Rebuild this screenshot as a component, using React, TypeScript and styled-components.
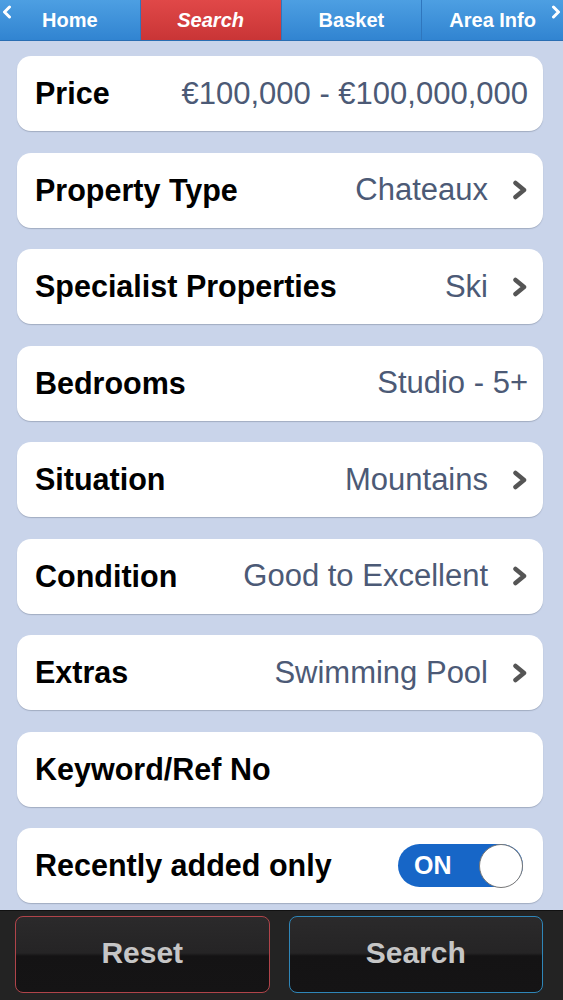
import styled, { createGlobalStyle } from 'styled-components';

const GlobalStyle = createGlobalStyle`
  html, body {
    margin: 0;
    padding: 0;
    background: #c9d4ea;
  }
  * {
    box-sizing: border-box;
  }
`;

type Row = {
  label: string;
  value?: string;
  arrow?: boolean;
  toggle?: boolean;
};

const rows: Row[] = [
  { label: 'Price', value: '€100,000 - €100,000,000' },
  { label: 'Property Type', value: 'Chateaux', arrow: true },
  { label: 'Specialist Properties', value: 'Ski', arrow: true },
  { label: 'Bedrooms', value: 'Studio - 5+' },
  { label: 'Situation', value: 'Mountains', arrow: true },
  { label: 'Condition', value: 'Good to Excellent', arrow: true },
  { label: 'Extras', value: 'Swimming Pool', arrow: true },
  { label: 'Keyword/Ref No' },
  { label: 'Recently added only', toggle: true },
];

const tabs = ['Home', 'Search', 'Basket', 'Area Info'];

const App = () => (
  <Page>
    <GlobalStyle />
    <TabBar>
      <EdgeArrow $side="left" viewBox="0 0 10 14">
        <path d="M7.5 2 L2.5 7 L7.5 12" fill="none" stroke="#fff" strokeWidth="3" strokeLinecap="round" strokeLinejoin="round" />
      </EdgeArrow>
      {tabs.map(t => (
        <Tab key={t} $active={t === 'Search'}>
          {t}
        </Tab>
      ))}
      <EdgeArrow $side="right" viewBox="0 0 10 14">
        <path d="M2.5 2 L7.5 7 L2.5 12" fill="none" stroke="#fff" strokeWidth="3" strokeLinecap="round" strokeLinejoin="round" />
      </EdgeArrow>
    </TabBar>
    <List>
      {rows.map(r => (
        <Card key={r.label}>
          <Label>{r.label}</Label>
          {r.value && <Value>{r.value}</Value>}
          {r.arrow && (
            <Chevron viewBox="0 0 16 20">
              <path d="M3.5 3 L12 10 L3.5 17" fill="none" stroke="#555" strokeWidth="4.5" strokeLinecap="round" strokeLinejoin="round" />
            </Chevron>
          )}
          {r.toggle && (
            <Toggle>
              <ToggleText>ON</ToggleText>
              <Knob />
            </Toggle>
          )}
        </Card>
      ))}
    </List>
    <BottomBar>
      <ActionButton $accent="#b0444a">Reset</ActionButton>
      <ActionButton $accent="#2f86b8">Search</ActionButton>
    </BottomBar>
  </Page>
);

const Page = styled.div`
  width: 563px;
  height: 1000px;
  display: flex;
  flex-direction: column;
  background: #c9d4ea;
  font-family: 'Liberation Sans', Arial, sans-serif;
  overflow: hidden;
`;

const TabBar = styled.div`
  position: relative;
  height: 41px;
  display: grid;
  grid-template-columns: repeat(4, 1fr);
  border-bottom: 1px solid #2a6eb3;
  background: linear-gradient(#4d9fe2, #3184d1);
`;

const Tab = styled.div<{ $active?: boolean }>`
  display: flex;
  align-items: center;
  justify-content: center;
  color: #fff;
  font-size: 20px;
  font-weight: bold;
  font-style: ${p => (p.$active ? 'italic' : 'normal')};
  border-right: 1px solid #2f76bd;
  background: ${p => (p.$active ? 'linear-gradient(#e04848, #c93536)' : 'transparent')};
  &:last-of-type {
    border-right: none;
  }
`;

const EdgeArrow = styled.svg<{ $side: 'left' | 'right' }>`
  position: absolute;
  top: 5px;
  ${p => (p.$side === 'left' ? 'left: 2px;' : 'right: 2px;')}
  width: 10px;
  height: 14px;
`;

const List = styled.div`
  flex: 1;
  display: flex;
  flex-direction: column;
  gap: 21.5px;
  padding: 15px 20px 0 17px;
`;

const Card = styled.div`
  height: 75px;
  display: flex;
  align-items: center;
  padding: 0 15px 0 18px;
  background: #fff;
  border-radius: 14px;
  box-shadow: 0 1px 1px rgba(90, 100, 120, 0.35);
`;

const Label = styled.div`
  flex: 1;
  font-size: 30.5px;
  font-weight: bold;
  color: #000;
  white-space: nowrap;
`;

const Value = styled.div`
  font-size: 31px;
  color: #4c5a76;
  white-space: nowrap;
`;

const Chevron = styled.svg`
  width: 16px;
  height: 20px;
  margin-left: 24px;
`;

const Toggle = styled.div`
  width: 125px;
  height: 43px;
  border-radius: 22px;
  background: #1766c7;
  display: flex;
  align-items: center;
  justify-content: space-between;
  padding-left: 16px;
  margin-right: 5px;
`;

const ToggleText = styled.span`
  color: #fff;
  font-size: 25px;
  font-weight: bold;
`;

const Knob = styled.div`
  width: 44px;
  height: 44px;
  border-radius: 50%;
  background: #fff;
  border: 1px solid #777;
`;

const BottomBar = styled.div`
  height: 90px;
  display: grid;
  grid-template-columns: 1fr 1fr;
  gap: 19px;
  padding: 5px 20px 7px 15px;
  background: #232323;
  border-top: 1px solid #111;
`;

const ActionButton = styled.div<{ $accent: string }>`
  display: flex;
  align-items: center;
  justify-content: center;
  padding-bottom: 4px;
  border: 1px solid ${p => p.$accent};
  border-radius: 8px;
  background: linear-gradient(#2b2a2b 0%, #252425 48%, #141314 52%, #151415 100%);
  color: #c6c6c6;
  font-size: 30px;
  font-weight: bold;
`;

export default App;
